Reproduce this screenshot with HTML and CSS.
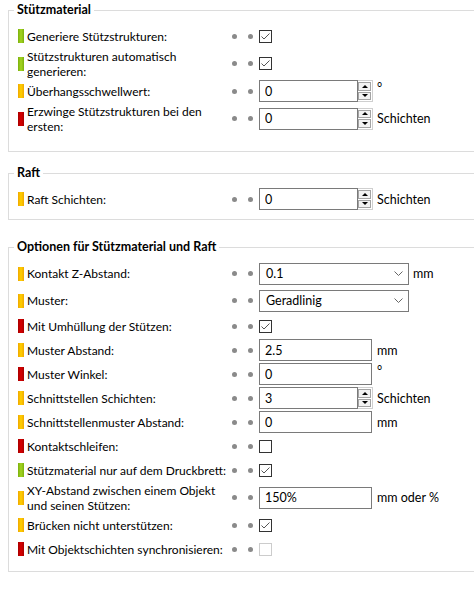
FILE: index.html
```html
<!DOCTYPE html>
<html lang="de">
<head>
<meta charset="utf-8">
<title>Stützmaterial</title>
<link rel="stylesheet" href="styles.css">
</head>
<body>
<fieldset class="group group-support">
  <legend>Stützmaterial</legend>
  <div class="row">
    <span class="bar green"></span><span class="label">Generiere Stützstrukturen:</span>
    <span class="dots"><i></i><i></i></span>
    <span class="check on"><svg viewBox="0 0 11 11"><polyline points="1.5,5.5 4,8 9.5,2.5"/></svg></span>
  </div>
  <div class="row tall">
    <span class="bar green"></span><span class="label">Stützstrukturen automatisch<br>generieren:</span>
    <span class="dots"><i></i><i></i></span>
    <span class="check on"><svg viewBox="0 0 11 11"><polyline points="1.5,5.5 4,8 9.5,2.5"/></svg></span>
  </div>
  <div class="row">
    <span class="bar yellow"></span><span class="label">Überhangsschwellwert:</span>
    <span class="dots"><i></i><i></i></span>
    <span class="spin"><input class="field spin-field" value="0"><span class="spin-btns"><span class="up"></span><span class="down"></span></span></span>
    <span class="unit sup">°</span>
  </div>
  <div class="row tall">
    <span class="bar red"></span><span class="label">Erzwinge Stützstrukturen bei den<br>ersten:</span>
    <span class="dots"><i></i><i></i></span>
    <span class="spin"><input class="field spin-field" value="0"><span class="spin-btns"><span class="up"></span><span class="down"></span></span></span>
    <span class="unit">Schichten</span>
  </div>
</fieldset>

<fieldset class="group group-raft">
  <legend>Raft</legend>
  <div class="row">
    <span class="bar yellow"></span><span class="label">Raft Schichten:</span>
    <span class="dots"><i></i><i></i></span>
    <span class="spin"><input class="field spin-field" value="0"><span class="spin-btns"><span class="up"></span><span class="down"></span></span></span>
    <span class="unit">Schichten</span>
  </div>
</fieldset>

<fieldset class="group group-options">
  <legend>Optionen für Stützmaterial und Raft</legend>
  <div class="row combo-row">
    <span class="bar yellow"></span><span class="label">Kontakt Z-Abstand:</span>
    <span class="dots"><i></i><i></i></span>
    <span class="combo"><span>0.1</span><svg viewBox="0 0 9 5"><polyline points="0.5,0.5 4.5,4.5 8.5,0.5"/></svg></span>
    <span class="unit unit-combo">mm</span>
  </div>
  <div class="row combo-row">
    <span class="bar yellow"></span><span class="label">Muster:</span>
    <span class="dots"><i></i><i></i></span>
    <span class="combo"><span>Geradlinig</span><svg viewBox="0 0 9 5"><polyline points="0.5,0.5 4.5,4.5 8.5,0.5"/></svg></span>
  </div>
  <div class="row">
    <span class="bar red"></span><span class="label">Mit Umhüllung der Stützen:</span>
    <span class="dots"><i></i><i></i></span>
    <span class="check on"><svg viewBox="0 0 11 11"><polyline points="1.5,5.5 4,8 9.5,2.5"/></svg></span>
  </div>
  <div class="row">
    <span class="bar yellow"></span><span class="label">Muster Abstand:</span>
    <span class="dots"><i></i><i></i></span>
    <input class="field text-field" value="2.5">
    <span class="unit">mm</span>
  </div>
  <div class="row">
    <span class="bar red"></span><span class="label">Muster Winkel:</span>
    <span class="dots"><i></i><i></i></span>
    <input class="field text-field" value="0">
    <span class="unit sup">°</span>
  </div>
  <div class="row">
    <span class="bar yellow"></span><span class="label">Schnittstellen Schichten:</span>
    <span class="dots"><i></i><i></i></span>
    <span class="spin"><input class="field spin-field" value="3"><span class="spin-btns"><span class="up"></span><span class="down"></span></span></span>
    <span class="unit">Schichten</span>
  </div>
  <div class="row">
    <span class="bar yellow"></span><span class="label">Schnittstellenmuster Abstand:</span>
    <span class="dots"><i></i><i></i></span>
    <input class="field text-field" value="0">
    <span class="unit">mm</span>
  </div>
  <div class="row">
    <span class="bar red"></span><span class="label">Kontaktschleifen:</span>
    <span class="dots"><i></i><i></i></span>
    <span class="check"></span>
  </div>
  <div class="row">
    <span class="bar green"></span><span class="label">Stützmaterial nur auf dem Druckbrett:</span>
    <span class="dots"><i></i><i></i></span>
    <span class="check on"><svg viewBox="0 0 11 11"><polyline points="1.5,5.5 4,8 9.5,2.5"/></svg></span>
  </div>
  <div class="row tall">
    <span class="bar yellow"></span><span class="label">XY-Abstand zwischen einem Objekt<br>und seinen Stützen:</span>
    <span class="dots"><i></i><i></i></span>
    <input class="field text-field" value="150%">
    <span class="unit">mm oder %</span>
  </div>
  <div class="row">
    <span class="bar yellow"></span><span class="label">Brücken nicht unterstützen:</span>
    <span class="dots"><i></i><i></i></span>
    <span class="check on"><svg viewBox="0 0 11 11"><polyline points="1.5,5.5 4,8 9.5,2.5"/></svg></span>
  </div>
  <div class="row">
    <span class="bar red"></span><span class="label">Mit Objektschichten synchronisieren:</span>
    <span class="dots"><i></i><i></i></span>
    <span class="check disabled"></span>
  </div>
</fieldset>
</body>
</html>
```

FILE: styles.css
```css
html, body {
  margin: 0;
  padding: 0;
  background: #ffffff;
  overflow: hidden;
}

body {
  font-family: Lato, "Noto Sans", sans-serif;
  font-size: 12px;
  color: #000;
  width: 474px;
  height: 595px;
}

.group {
  margin: 2px -20px 0 8px;
  padding: 6px 0 8px 9px;
  border: 1px solid #dcdcdc;
  min-width: 0;
}

.group-support { padding-bottom: 17px; }
.group-raft { margin-top: 13px; padding-bottom: 8px; }
.group-options { margin-top: 19px; padding-top: 5px; padding-bottom: 10px; }

legend {
  font-weight: bold;
  font-size: 12.5px;
  line-height: 16px;
  padding: 0 3px;
  margin-left: -4px;
}

.row {
  display: flex;
  align-items: center;
  min-height: 24px;
}

.row.tall { min-height: 31px; }
.row.combo-row { min-height: 27px; }

.bar {
  flex: none;
  width: 6px;
  height: 14px;
  margin-right: 3px;
}

.bar.green { background: linear-gradient(to right, #7cb10e, #a3d420 50%, #7cb10e); }
.bar.yellow { background: linear-gradient(to right, #f0a800, #ffd000 50%, #f0a800); }
.bar.red { background: linear-gradient(to right, #a80000, #d80000 50%, #a80000); }

.label {
  flex: none;
  width: 203px;
  line-height: 15px;
  white-space: nowrap;
}

.dots {
  flex: none;
  display: flex;
  gap: 11px;
  margin: 0 6px 0 2px;
}

.dots i {
  display: block;
  width: 5px;
  height: 5px;
  border-radius: 50%;
  background: #8a8a8a;
}

.check {
  flex: none;
  box-sizing: border-box;
  width: 13px;
  height: 13px;
  border: 1px solid #333;
  background: #fff;
  display: flex;
}

.check svg {
  width: 11px;
  height: 11px;
  fill: none;
  stroke: #555;
  stroke-width: 1;
}

.check.disabled { border-color: #cccccc; }

.field {
  box-sizing: border-box;
  height: 22px;
  border: 1px solid #7a7a7a;
  padding: 0 5px;
  margin: 0;
  font: inherit;
  font-size: 12.5px;
  color: #000;
  background: #fff;
  outline: none;
}

.text-field { width: 113px; flex: none; }

.spin {
  flex: none;
  display: flex;
}

.spin-field { width: 99px; }

.spin-btns {
  box-sizing: border-box;
  width: 15px;
  height: 22px;
  border: 1px solid #cfcfcf;
  border-left: none;
  display: flex;
  flex-direction: column;
  padding: 1px 1px 1px 0;
  gap: 1px;
}

.spin-btns span {
  flex: 1;
  box-sizing: border-box;
  border: 1px solid #a3a3a3;
  background: #f2f2f2;
  display: flex;
  align-items: center;
  justify-content: center;
}

.spin-btns .up::after,
.spin-btns .down::after {
  content: "";
  width: 0;
  height: 0;
  border-left: 3px solid transparent;
  border-right: 3px solid transparent;
}

.spin-btns .up::after { border-bottom: 3px solid #000; }
.spin-btns .down::after { border-top: 3px solid #000; }

.combo {
  flex: none;
  box-sizing: border-box;
  width: 150px;
  height: 22px;
  border: 1px solid #7a7a7a;
  padding: 0 5px 0 6px;
  display: flex;
  align-items: center;
  justify-content: space-between;
  font-size: 12.5px;
}

.combo svg {
  width: 9px;
  height: 5px;
  fill: none;
  stroke: #666;
  stroke-width: 1;
}

.unit {
  margin-left: 5px;
  white-space: nowrap;
  font-size: 12.5px;
}

.spin + .unit { margin-left: 4px; }
.unit-combo { margin-left: 4px; }
.unit.sup { align-self: flex-start; margin-top: 1px; }
```
